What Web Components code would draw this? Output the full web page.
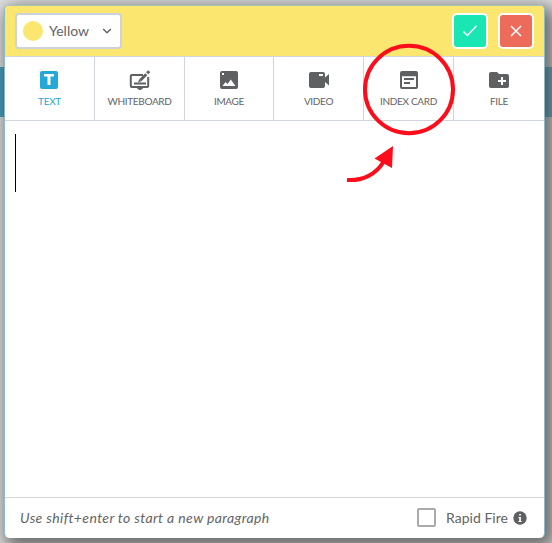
<!DOCTYPE html>
<html lang="en">
<head>
<meta charset="utf-8">
<title>New card</title>
<style>
html,body{margin:0;height:100%;overflow:hidden}
body{font-family:Lato,"Open Sans",sans-serif;color:#636466;background:#e2e2e2}
</style>
</head>
<body>
<card-dialog></card-dialog>
<script>
const define = (name, html) => customElements.define(name, class extends HTMLElement {
  connectedCallback() {
    if (this.shadowRoot) return;
    const t = document.createElement('template');
    t.innerHTML = html;
    this.attachShadow({mode:'open'}).append(t.content.cloneNode(true));
  }
});

define('color-picker', `
<style>
:host{display:flex;align-items:center;box-sizing:border-box;width:107px;height:36px;border:2px solid #ccd1dc;border-radius:4px;background:#fff;padding:0 8px 0 6px;font-size:14px}
i{width:20px;height:20px;border-radius:50%;background:#fbe66f;margin-right:6px}
span{flex:1;white-space:nowrap;padding-bottom:2px}
svg{display:block}
</style>
<i></i><span><slot></slot></span>
<svg width="10" height="8" viewBox="0 0 10 8"><path d="M1.2 2 5 5.8 8.8 2" fill="none" stroke="#636466" stroke-width="1.5"/></svg>`);

define('action-button', `
<style>
:host{display:grid;place-items:center;box-sizing:border-box;width:36px;height:36px;border:2px solid #fff;border-radius:5px;background:var(--fill)}
</style><slot></slot>`);

define('type-tab', `
<style>
:host{display:flex;flex-direction:column;align-items:center;box-sizing:border-box;border-right:1px solid #d0d4de;padding-top:13px;font-size:10px;line-height:14px;min-width:0}
:host(:last-of-type){border-right:0}
:host([active]){color:#23a8d8}
::slotted(svg){display:block;width:22px;height:20px;margin-bottom:4px}
span{white-space:nowrap;letter-spacing:-.33px}
</style><slot name="icon"></slot><span><slot></slot></span>`);

define('card-editor', `
<style>
:host{display:block;box-sizing:border-box;padding:13px 10px;background:#fff}
i{display:block;width:1px;height:58px;background:#000}
</style><i></i>`);

define('check-option', `
<style>
:host{display:flex;align-items:center;font-size:14px}
i{box-sizing:border-box;width:19px;height:19px;border:2px solid #aaa;border-radius:2px;margin-right:10px}
span{width:62px;white-space:nowrap;letter-spacing:.03px}
svg{display:block;margin-left:5px}
</style><i></i><span><slot></slot></span>
<svg width="14" height="14" viewBox="0 0 14 14"><circle cx="7" cy="7" r="6.7" fill="#5f6062"/><path d="M6.200 3h1.700v1.500H6.200zM5.500 6h2.400v3.900h.7v1H5.500v-1h.7V7h-.7z" fill="#fff"/></svg>`);

define('callout-mark', `
<style>:host{position:absolute;left:340px;top:30px;pointer-events:none}svg{display:block}</style>
<svg width="130" height="160" viewBox="340 30 130 160"><g fill="none" stroke="#fc0d1b" stroke-width="4"><ellipse cx="409" cy="89.5" rx="44" ry="43.7"/><path d="M347 180C362 181 376 175 384 161"/></g><path d="M393 146 374.500 158.500 392 168z" fill="#fc0d1b"/></svg>`);

define('card-dialog', `
<style>
:host{display:block;position:relative;box-sizing:border-box;height:543px;padding:5px 7px 5px 4px;overflow:hidden;background:linear-gradient(90deg,#4ba3c1 50%,#86bccd 50%) 0 67px/100% 50px no-repeat}
main{box-sizing:border-box;height:533px;border:1px solid #8bb9c6;border-top-color:#a6c4b4;border-bottom:0;border-radius:5px;overflow:hidden;display:grid;grid-template-rows:51px 64px 1fr 41px;background:#fff;box-shadow:5px 6px 17px 5px rgba(0,0,0,.52)}
header{display:flex;align-items:center;background:#fbe66f;border-bottom:1px solid #d1d5dc;padding:0 10px;gap:10px}
.space{flex:1}
nav{display:grid;grid-template-columns:90px 90px 89px 90px 90px 1fr;border-bottom:1px solid #d0d4de}
footer{display:flex;align-items:center;justify-content:space-between;border-top:1px solid #d2d4d5;padding:0 17px 1px 15px;font-size:14px}
em{white-space:nowrap;letter-spacing:.37px}
</style>
<main>
<header><color-picker>Yellow</color-picker><div class="space"></div>
<action-button style="--fill:#19e6b3"><svg width="16" height="14" viewBox="0 0 16 14"><path d="m1.500 7.500 4 4L14.500 1.800" fill="none" stroke="#fff" stroke-width="1.500"/></svg></action-button>
<action-button style="--fill:#ec6b5b"><svg width="12" height="12" viewBox="0 0 12 12"><path d="m1 1 10 10M11 1 1 11" stroke="#fff" stroke-width="1.500"/></svg></action-button></header>
<nav>
<type-tab active><svg slot="icon" viewBox="0 0 22 20"><rect x="1" y="1" width="18" height="18" rx="2" fill="#23a8d8"/><path d="M5 4h10v2.500h-3.500V15h-3V6.500H5z" fill="#fff"/></svg>TEXT</type-tab>
<type-tab><svg slot="icon" viewBox="0 0 22 20"><g fill="none" stroke="#5f6062"><path d="M14 5H2.800a1 1 0 0 0-1 1v10a1 1 0 0 0 1 1h15.400a1 1 0 0 0 1-1V7" stroke-width="2"/><path d="M5 13.500h12" stroke-width="2"/><path d="m11.300 10.200 6-6" stroke-width="3"/><path d="m18.200 3.300 2-2" stroke-width="3"/></g><path d="m9 12.500 1.200-3.300 2.100 2.100zM8 17.500h6v1.200h-1.500v1.300h-3v-1.300H8z" fill="#5f6062"/></svg>WHITEBOARD</type-tab>
<type-tab><svg slot="icon" viewBox="0 0 22 20"><rect x="2" y="1" width="18" height="18" rx="2" fill="#5f6062"/><path d="m4.500 16 3-4 2 2 3.300-4.500L17.500 16zM4 3h2v2H4z" fill="#fff"/></svg>IMAGE</type-tab>
<type-tab><svg slot="icon" viewBox="0 0 22 20"><path d="M3 2h12a2 2 0 0 1 2 2v3.500l4-3.500v11.500l-4-3.500v4a2 2 0 0 1-2 2H3a2 2 0 0 1-2-2V4a2 2 0 0 1 2-2z" fill="#5f6062"/><path d="M11 4h4v2h-4z" fill="#fff"/></svg>VIDEO</type-tab>
<type-tab><svg slot="icon" viewBox="0 0 22 20"><path fill-rule="evenodd" d="M4 1h14a2 2 0 0 1 2 2v14a2 2 0 0 1-2 2H4a2 2 0 0 1-2-2V3a2 2 0 0 1 2-2zm0 5.300V17h14V6.300z" fill="#5f6062"/><path d="M6 9h10M6 13h6" stroke="#5f6062" stroke-width="1.800"/></svg>INDEX CARD</type-tab>
<type-tab><svg slot="icon" viewBox="0 0 22 20"><path d="M3 2h6l2 2h8a2 2 0 0 1 2 2v10a2 2 0 0 1-2 2H3a2 2 0 0 1-2-2V4a2 2 0 0 1 2-2z" fill="#5f6062"/><path d="M14 7v8M10 11h8" stroke="#fff" stroke-width="1.900"/></svg>FILE</type-tab>
</nav>
<card-editor></card-editor>
<footer><em>Use shift+enter to start a new paragraph</em><check-option>Rapid Fire</check-option></footer>
</main>
<callout-mark></callout-mark>`);
</script>
</body>
</html>
